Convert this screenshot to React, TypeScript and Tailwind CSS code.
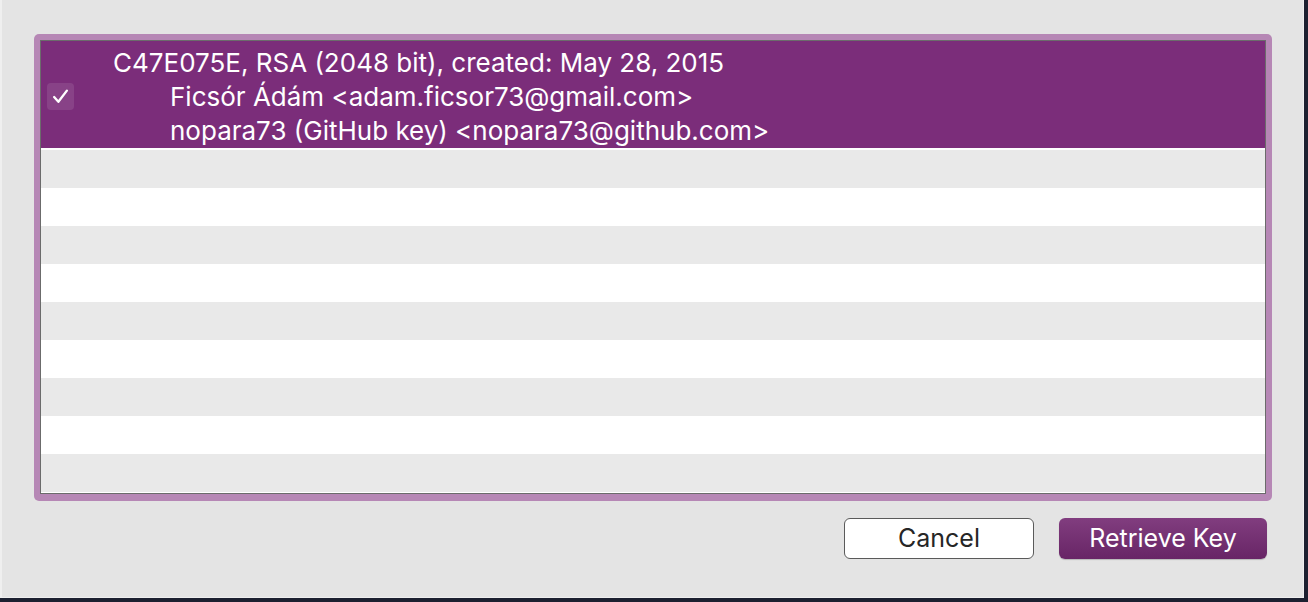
export default function App() {
  const stripes = Array.from({ length: 9 });
  return (
    <div className="w-[1308px] h-[602px] bg-[#1c2030] overflow-hidden" style={{ fontFamily: "Inter, 'Liberation Sans', sans-serif" }}>
      <div className="w-[1304px] h-[598px] bg-[#e4e4e4] border-r border-b border-l-2 border-[#efefef] pt-[34px] pl-[32px]">
        <div className="w-[1238px] rounded-[5px] bg-[#b687b5] pt-[6px] px-[6px] pb-[7px]">
          <div className="border border-[#6b6b6b] bg-white h-[454px] overflow-hidden">
            <div className="h-[107px] bg-[#7b2d7a] flex items-start text-white">
              <div className="ml-[6px] mt-[42px] w-[27px] h-[27px] rounded-[4px] bg-white/10 flex items-center justify-center">
                <svg width="17" height="15" viewBox="0 0 16 14" fill="none">
                  <path d="M2 7.5 L6 12 L14 1.5" stroke="white" strokeWidth="2.2" strokeLinecap="round" strokeLinejoin="round" />
                </svg>
              </div>
              <div className="ml-[39px] pt-[5px] text-[26px] leading-[34px]">
                <div>C47E075E, RSA (2048 bit), created: May 28, 2015</div>
                <div className="pl-[57px]">Ficsór Ádám &lt;adam.ficsor73@gmail.com&gt;</div>
                <div className="pl-[57px]">nopara73 (GitHub key) &lt;nopara73@github.com&gt;</div>
              </div>
            </div>
            <div className="mt-[2px]">
              {stripes.map((_, i) => (
                <div key={i} className={i % 2 === 0 ? "h-[38px] bg-[#e9e9e9]" : "h-[38px] bg-white"} />
              ))}
            </div>
          </div>
        </div>
        <div className="flex justify-end gap-[25px] pr-[36px] mt-[17px]">
          <button className="w-[190px] h-[41px] rounded-[6px] border border-[#5a5a5a] bg-white text-[#262626] text-[25px]">
            Cancel
          </button>
          <button className="w-[208px] h-[41px] rounded-[6px] bg-gradient-to-b from-[#813d7f] to-[#682566] text-white text-[25px] shadow-[0_1px_1px_rgba(0,0,0,0.2)]">
            Retrieve Key
          </button>
        </div>
      </div>
    </div>
  );
}
